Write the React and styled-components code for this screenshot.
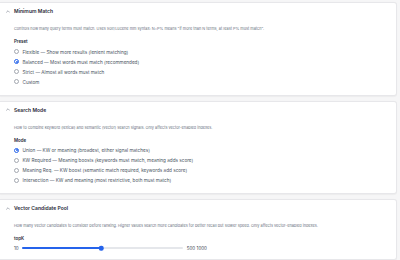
import React, { useState } from "react";
import styled, { createGlobalStyle } from "styled-components";

const GlobalStyle = createGlobalStyle`
  html, body { margin: 0; padding: 0; background: #ffffff; }
  body { font-family: Inter, "Liberation Sans", Arial, sans-serif; color: #1f2937; }
`;

const Page = styled.div`
  width: 400px;
  height: 260px;
  overflow: hidden;
  background: #f6f6f7;
  padding: 2px 3px 0 0;
  box-sizing: border-box;
  display: flex;
  flex-direction: column;
  gap: 5px;
`;

const Card = styled.section`
  background: #fff;
  border: 1px solid #e7e7ea;
  border-left: none;
  border-radius: 0 3px 3px 0;
  box-shadow: 0 0.5px 1px rgba(0, 0, 0, 0.04);
  flex-shrink: 0;
`;

const Header = styled.div`
  height: 16px;
  display: flex;
  align-items: center;
  gap: 4px;
  padding-left: 6px;
`;

const Title = styled.span`
  font-size: 5px;
  font-weight: 600;
  color: #1f2937;
  letter-spacing: 0.02px;
`;

const Body = styled.div`
  padding: 0 14px ${(p) => p.$bottom || 8}px 14px;
`;

const Description = styled.p`
  margin: 7px 0 0;
  font-size: 3.85px;
  line-height: 6px;
  color: #6b7280;
  white-space: nowrap;
`;

const FieldLabel = styled.div`
  margin-top: 7px;
  font-size: 4.4px;
  line-height: 6px;
  font-weight: 600;
  color: #1f2937;
`;

const RadioList = styled.div`
  margin-top: 1.5px;
  display: flex;
  flex-direction: column;
`;

const RadioRow = styled.label`
  height: 10px;
  display: flex;
  align-items: center;
  gap: 3.5px;
  font-size: 4.65px;
  color: #4b5563;
  cursor: pointer;
  white-space: nowrap;
`;

const RadioDot = styled.span`
  width: 5px;
  height: 5px;
  border-radius: 50%;
  box-sizing: border-box;
  border: ${(p) => (p.$on ? "1px solid #2563eb" : "0.6px solid #a3a8b0")};
  background: #fff;
  display: flex;
  align-items: center;
  justify-content: center;
  &::after {
    content: "";
    width: 2px;
    height: 2px;
    border-radius: 50%;
    background: ${(p) => (p.$on ? "#2563eb" : "transparent")};
  }
`;

const SliderRow = styled.div`
  margin-top: 2px;
  height: 8px;
  display: flex;
  align-items: center;
  gap: 3px;
  font-size: 4.5px;
  color: #374151;
`;

const Track = styled.div`
  position: relative;
  width: 161px;
  height: 2px;
  border-radius: 1px;
  background: #e5e7eb;
`;

const Fill = styled.div`
  height: 100%;
  border-radius: 1px;
  background: #2563eb;
`;

const Thumb = styled.div`
  position: absolute;
  top: 50%;
  width: 4.5px;
  height: 4.5px;
  border-radius: 50%;
  background: #2563eb;
  transform: translate(-50%, -50%);
`;

const Values = styled.span`
  margin-left: 1px;
  display: flex;
  gap: 1.5px;
`;

const Chevron = () => (
  <svg width="4" height="3" viewBox="0 0 8 5" fill="none">
    <path d="M1 4 L4 1 L7 4" stroke="#6b7280" strokeWidth="1.1" strokeLinecap="round" strokeLinejoin="round" />
  </svg>
);

const RadioGroup = ({ options, value, onChange }) => (
  <RadioList>
    {options.map((o) => (
      <RadioRow key={o} onClick={() => onChange(o)}>
        <RadioDot $on={value === o} />
        {o}
      </RadioRow>
    ))}
  </RadioList>
);

const presets = [
  "Flexible — Show more results (lenient matching)",
  "Balanced — Most words must match (recommended)",
  "Strict — Almost all words must match",
  "Custom",
];

const modes = [
  "Union — KW or meaning (broadest, either signal matches)",
  "KW Required — Meaning boosts (keywords must match, meaning adds score)",
  "Meaning Req. — KW boost (semantic match required, keywords add score)",
  "Intersection — KW and meaning (most restrictive, both must match)",
];

const App = () => {
  const [preset, setPreset] = useState(presets[1]);
  const [mode, setMode] = useState(modes[0]);
  const topK = 500;
  const pct = ((topK - 10) / (1000 - 10)) * 100;

  return (
    <>
      <GlobalStyle />
      <Page>
        <Card>
          <Header>
            <Chevron />
            <Title>Minimum Match</Title>
          </Header>
          <Body>
            <Description>
              Controls how many query terms must match. Uses Solr/Lucene mm syntax: N&lt;P% means "if more than N terms, at least P% must match".
            </Description>
            <FieldLabel>Preset</FieldLabel>
            <RadioGroup options={presets} value={preset} onChange={setPreset} />
          </Body>
        </Card>

        <Card>
          <Header>
            <Chevron />
            <Title>Search Mode</Title>
          </Header>
          <Body>
            <Description>
              How to combine keyword (lexical) and semantic (vector) search signals. Only affects vector-enabled indexes.
            </Description>
            <FieldLabel>Mode</FieldLabel>
            <RadioGroup options={modes} value={mode} onChange={setMode} />
          </Body>
        </Card>

        <Card>
          <Header>
            <Chevron />
            <Title>Vector Candidate Pool</Title>
          </Header>
          <Body $bottom={7}>
            <Description>
              How many vector candidates to consider before ranking. Higher values search more candidates for better recall but slower speed. Only affects vector-enabled indexes.
            </Description>
            <FieldLabel>topK</FieldLabel>
            <SliderRow>
              <span>10</span>
              <Track>
                <Fill style={{ width: `${pct}%` }} />
                <Thumb style={{ left: `${pct}%` }} />
              </Track>
              <Values>
                <span>{topK}</span>
                <span>1000</span>
              </Values>
            </SliderRow>
          </Body>
        </Card>
      </Page>
    </>
  );
};

export default App;
